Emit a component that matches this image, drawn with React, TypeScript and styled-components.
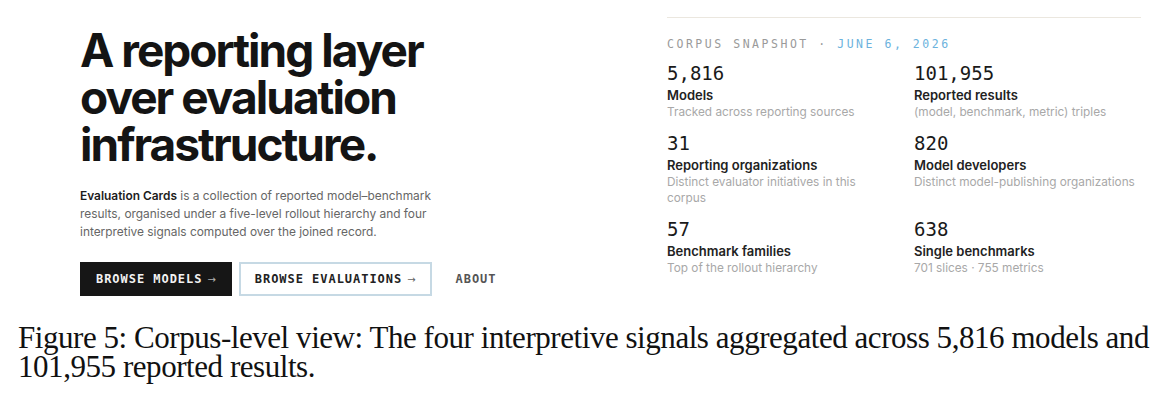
import React from 'react';
import styled, { createGlobalStyle } from 'styled-components';

const GlobalStyle = createGlobalStyle`
  html, body {
    margin: 0;
    padding: 0;
    background: #ffffff;
  }
  body {
    font-family: Inter, "Noto Sans", sans-serif;
    -webkit-font-smoothing: antialiased;
  }
`;

const mono = `"DejaVu Sans Mono", "Liberation Mono", monospace`;

const Page = styled.div`
  width: 1165px;
  height: 401px;
  overflow: hidden;
`;

const Hero = styled.section`
  display: grid;
  grid-template-columns: 587px 474px;
  padding-left: 80px;
  height: 305px;
`;

const Intro = styled.div`
  display: flex;
  flex-direction: column;
  padding-top: 27px;
`;

const Headline = styled.h1`
  margin: 0;
  font-size: 46px;
  line-height: 47px;
  font-weight: 700;
  letter-spacing: -0.043em;
  color: #141414;
`;

const Lede = styled.p`
  margin: 19px 0 0;
  width: 370px;
  font-size: 11.9px;
  line-height: 18px;
  color: #666666;

  strong {
    color: #1c1c1c;
    font-weight: 600;
  }
`;

const Actions = styled.div`
  display: flex;
  align-items: center;
  gap: 7px;
  margin-top: 21px;
`;

const ActionButton = styled.a<{ $variant: 'solid' | 'outline' | 'plain' }>`
  display: inline-flex;
  align-items: center;
  box-sizing: border-box;
  height: 34px;
  padding: 0 14px;
  font-family: ${mono};
  font-size: 12px;
  font-weight: 600;
  letter-spacing: 0.08em;
  text-decoration: none;
  cursor: pointer;
  background: ${p => (p.$variant === 'solid' ? '#161616' : '#ffffff')};
  color: ${p => (p.$variant === 'solid' ? '#f2f2f2' : p.$variant === 'outline' ? '#222222' : '#555555')};
  border: 2px solid ${p => (p.$variant === 'solid' ? '#161616' : p.$variant === 'outline' ? '#c6d9e4' : 'transparent')};
  margin-left: ${p => (p.$variant === 'plain' ? '1px' : '0')};
`;

const Arrow = styled.span`
  margin-left: 5px;
  font-family: "DejaVu Sans", sans-serif;
  font-weight: 400;
  font-size: 10px;
  letter-spacing: 0;
  opacity: 0.7;
`;

const Snapshot = styled.aside`
  margin-top: 17px;
  border-top: 1px solid #ebe7df;
  padding-top: 18px;
`;

const Eyebrow = styled.div`
  font-family: ${mono};
  font-size: 11.5px;
  line-height: 16px;
  letter-spacing: 0.22em;
  color: #9a9a9a;
`;

const DateTag = styled.span`
  color: #6cb2dd;
`;

const StatGrid = styled.div`
  display: grid;
  grid-template-columns: 223px 240px;
  column-gap: 24px;
  row-gap: 11px;
  margin-top: 9px;
`;

const Stat = styled.div`
  display: flex;
  flex-direction: column;
`;

const StatValue = styled.div`
  font-family: ${mono};
  font-size: 19px;
  line-height: 24px;
  color: #1a1a1a;
`;

const StatLabel = styled.div`
  margin-top: 2px;
  font-size: 13px;
  line-height: 16px;
  font-weight: 600;
  color: #222222;
`;

const StatNote = styled.div`
  margin-top: 1px;
  font-size: 11.8px;
  line-height: 16px;
  color: #a8a8a8;
`;

const Caption = styled.p`
  margin: 18px 0 0 18px;
  width: 1145px;
  font-family: "Liberation Serif", "Times New Roman", serif;
  font-size: 31px;
  line-height: 29px;
  letter-spacing: -0.45px;
  color: #111111;
`;

const stats = [
  { value: '5,816', label: 'Models', note: 'Tracked across reporting sources' },
  { value: '101,955', label: 'Reported results', note: '(model, benchmark, metric) triples' },
  { value: '31', label: 'Reporting organizations', note: 'Distinct evaluator initiatives in this corpus' },
  { value: '820', label: 'Model developers', note: 'Distinct model-publishing organizations' },
  { value: '57', label: 'Benchmark families', note: 'Top of the rollout hierarchy' },
  { value: '638', label: 'Single benchmarks', note: '701 slices · 755 metrics' },
];

export default function App(): JSX.Element {
  return (
    <Page>
      <GlobalStyle />
      <Hero>
        <Intro>
          <Headline>
            A reporting layer
            <br />
            over evaluation
            <br />
            infrastructure.
          </Headline>
          <Lede>
            <strong>Evaluation Cards</strong> is a collection of reported model–benchmark
            results, organised under a five-level rollout hierarchy and four
            interpretive signals computed over the joined record.
          </Lede>
          <Actions>
            <ActionButton $variant="solid">
              BROWSE MODELS<Arrow>→</Arrow>
            </ActionButton>
            <ActionButton $variant="outline">
              BROWSE EVALUATIONS<Arrow>→</Arrow>
            </ActionButton>
            <ActionButton $variant="plain">ABOUT</ActionButton>
          </Actions>
        </Intro>
        <Snapshot>
          <Eyebrow>
            CORPUS SNAPSHOT · <DateTag>JUNE 6, 2026</DateTag>
          </Eyebrow>
          <StatGrid>
            {stats.map(s => (
              <Stat key={s.label}>
                <StatValue>{s.value}</StatValue>
                <StatLabel>{s.label}</StatLabel>
                <StatNote>{s.note}</StatNote>
              </Stat>
            ))}
          </StatGrid>
        </Snapshot>
      </Hero>
      <Caption>
        Figure 5: Corpus-level view: The four interpretive signals aggregated across 5,816 models and
        101,955 reported results.
      </Caption>
    </Page>
  );
}
